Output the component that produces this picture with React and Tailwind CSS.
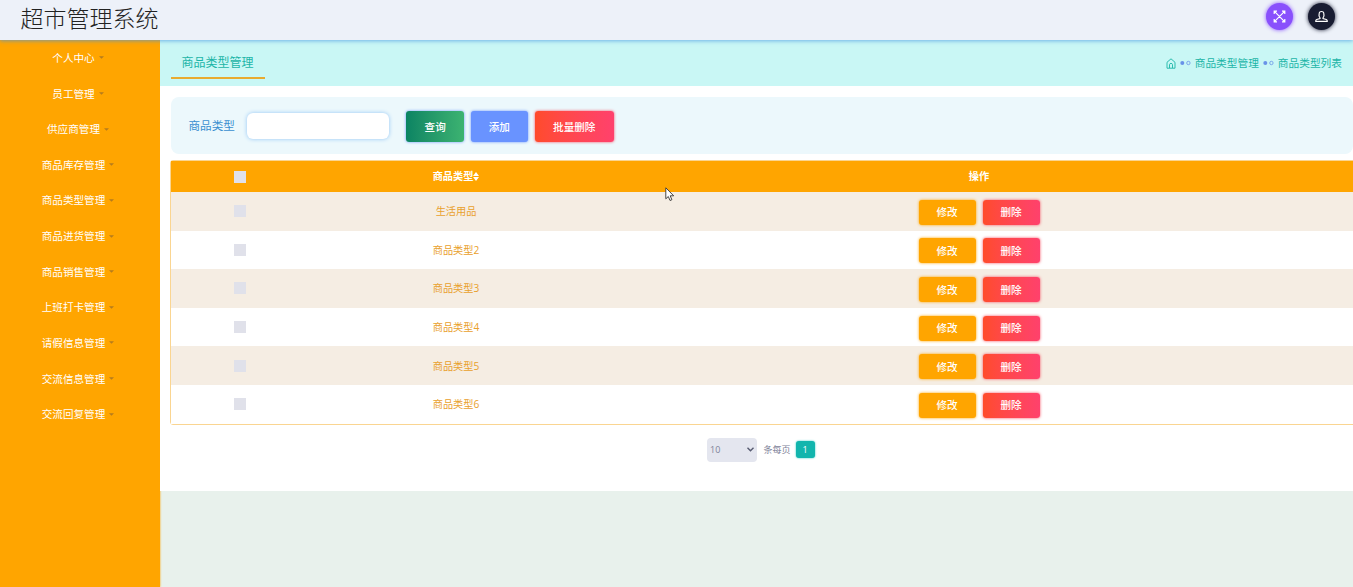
import { useState } from "react";

const menus = [
  "个人中心",
  "员工管理",
  "供应商管理",
  "商品库存管理",
  "商品类型管理",
  "商品进货管理",
  "商品销售管理",
  "上班打卡管理",
  "请假信息管理",
  "交流信息管理",
  "交流回复管理",
];

const initialTypes = ["生活用品", "商品类型2", "商品类型3", "商品类型4", "商品类型5", "商品类型6"];

const Header = () => (
  <header className="relative z-10 flex h-10 shrink-0 items-start justify-between bg-[#edf1f9] pl-[20.5px] pr-[18px] shadow-[0_1px_4px_rgba(70,150,225,0.7)]">
    <h1 className="text-[23px] font-light leading-[37px] text-[#222222]">超市管理系统</h1>
    <div className="flex gap-[15px] pt-[3px]">
      <button className="flex size-[27px] items-center justify-center rounded-full bg-[#8950fc] text-white shadow-[0_0_4px_#8950fc]">
        <svg width="13" height="13" viewBox="0 0 13 13" fill="none" stroke="currentColor" strokeWidth="1.2">
          <path d="M1.2 1.2l10.6 10.6M11.8 1.2L1.2 11.8M1.2 4V1.2H4M9 1.2h2.8V4M11.8 9v2.8H9M4 11.8H1.2V9" />
        </svg>
      </button>
      <button className="flex size-[27px] items-center justify-center rounded-full bg-[#181c32] text-white shadow-[0_0_4px_#181c32]">
        <svg width="13" height="13" viewBox="0 0 13 13" fill="none" stroke="currentColor" strokeWidth="1.2">
          <path d="M5 7.8C3.9 6.5 3.8 4.8 4.2 3.2c.2-1 1-1.7 2.3-1.7s2.1.7 2.3 1.7c.4 1.6.3 3.3-.8 4.6M5 7.8v.8l-3.3.9c-.6.2-.9.6-.9 1.2v.7h11.400v-.7c0-.6-.3-1-.9-1.200L8 8.600v-.8" />
        </svg>
      </button>
    </div>
  </header>
);

const Sidebar = () => (
  <aside className="w-40 shrink-0 bg-[#ffa500] pt-[1px] shadow-[0_0_2px_#ffa500]">
    <ul>
      {menus.map((menu) => (
        <li key={menu} className="flex h-[35.65px] items-center justify-center gap-[4px] pr-[4px] text-[10.6px] text-white">
          <span>{menu}</span>
          <svg width="5" height="3" viewBox="0 0 6 3" className="mb-[2px]">
            <path d="M0 0h6L3 3z" fill="#b67c1c" />
          </svg>
        </li>
      ))}
    </ul>
  </aside>
);

const Dots = () => (
  <svg className="mx-[4px]" width="11" height="6" viewBox="0 0 11 6">
    <circle cx="2.3" cy="3" r="2" fill="#6993e8" />
    <circle cx="8.4" cy="3" r="1.7" fill="none" stroke="#6993e8" strokeWidth="0.8" />
  </svg>
);

const Breadcrumb = () => (
  <div className="flex h-[46px] items-start justify-between bg-[#c9f7f5] pl-[11px] pr-[11px]">
    <h2 className="h-[38.5px] w-[94px] border-b-[2.5px] border-[#e8ab30] pl-[10.5px] text-[12px] leading-[45px] text-[#1bb5a7]">
      商品类型管理
    </h2>
    <div className="flex items-center text-[10.7px] leading-[46px] text-[#1bb5a7]">
      <svg width="10" height="11" viewBox="0 0 10 11" fill="none" stroke="currentColor" strokeWidth="0.9">
        <path d="M1 4.3L5 .8l4 3.5v5.9H1zM3.5 10V6.6c0-1.6 3-1.6 3 0V10" />
      </svg>
      <Dots />
      <span>商品类型管理</span>
      <Dots />
      <span>商品类型列表</span>
    </div>
  </div>
);

const SearchBar = ({ keyword, setKeyword, onAdd, onRemove }) => (
  <div className="mt-[11px] ml-[11px] flex h-[57px] items-center rounded-lg bg-[#ecf8fc] pl-[17.5px]">
    <label htmlFor="keyword" className="text-[11.6px] text-[#3a8fd0]">
      商品类型
    </label>
    <input
      id="keyword"
      value={keyword}
      onChange={(e) => setKeyword(e.target.value)}
      className="ml-[12px] mt-[1px] h-[26px] w-[142px] rounded-md bg-white px-2 text-xs shadow-[0_0_4px_#93c5f5] outline-none"
    />
    <div className="ml-[17.5px] mt-[2px] flex gap-[6.7px] text-[10.6px] font-medium text-white">
      <button className="h-[31px] w-[57.5px] rounded-[3px] bg-linear-to-r from-[#0a8463] to-[#3cb371] pt-[2px] shadow-[0_0_3px_#6993ff]">
        查询
      </button>
      <button onClick={onAdd} className="h-[31px] w-[57.5px] rounded-[3px] bg-[#6993ff] pt-[2px] shadow-[0_0_3px_#6993ff]">
        添加
      </button>
      <button onClick={onRemove} className="h-[31px] w-[79px] rounded-[3px] bg-linear-to-r from-[#ff4b2b] to-[#ff416c] pt-[2px] shadow-[0_0_3px_#f64e60]">
        批量删除
      </button>
    </div>
  </div>
);

const CheckBox = ({ checked, onChange }) => (
  <input
    type="checkbox"
    checked={checked}
    onChange={onChange}
    className="block size-[12px] appearance-none bg-[#e0e1ea] checked:bg-[#6993ff]"
  />
);

const App = () => {
  const [types, setTypes] = useState(initialTypes);
  const [selected, setSelected] = useState([]);
  const [keyword, setKeyword] = useState("");

  const rows = types.filter((type) => type.includes(keyword));

  const toggle = (type) => {
    setSelected(selected.includes(type) ? selected.filter((s) => s !== type) : [...selected, type]);
  };

  const remove = (list) => {
    setTypes(types.filter((type) => !list.includes(type)));
    setSelected([]);
  };

  return (
    <div className="flex h-screen flex-col overflow-hidden bg-[#e8f1ec] font-['Open_Sans','Noto_Sans_CJK_SC',sans-serif]">
      <Header />
      <div className="flex min-h-0 flex-1">
        <Sidebar />
        <main className="min-w-0 flex-1">
          <div className="h-[451px] bg-white">
            <Breadcrumb />
            <SearchBar
              keyword={keyword}
              setKeyword={setKeyword}
              onAdd={() => setTypes([...types, `商品类型${types.length + 1}`])}
              onRemove={() => remove(selected)}
            />

            {/* Type table, runs slightly past the right edge */}
            <div className="ml-[10px] mt-[6px] w-[1186px] rounded-[3px] border border-[#fad591] text-[10.2px]">
              <div className="grid h-[31px] grid-cols-[138px_294px_752px] place-items-center bg-[#ffa500] font-bold text-white">
                <CheckBox
                  checked={rows.length > 0 && selected.length === rows.length}
                  onChange={() => setSelected(selected.length === rows.length ? [] : rows)}
                />
                <span className="flex items-center">
                  商品类型
                  <svg width="6" height="9" viewBox="0 0 6 9" fill="currentColor">
                    <path d="M3 0L6 3.9H0zM3 9L0 5.1h6z" />
                  </svg>
                </span>
                <span>操作</span>
              </div>
              {rows.map((type) => (
                <div
                  key={type}
                  className="grid h-[38.6px] grid-cols-[138px_294px_752px] place-items-center bg-white even:bg-[#f5ede3]"
                >
                  <CheckBox checked={selected.includes(type)} onChange={() => toggle(type)} />
                  <span className="pt-[1px] text-[#e9a02c]">{type}</span>
                  <div className="mt-[2px] flex gap-[7px] text-[10.6px] font-medium text-white">
                    <button className="h-[25px] w-[57px] rounded-[3px] bg-[#ffa500] pt-[2px] shadow-[0_0_3px_#ffa500]">
                      修改
                    </button>
                    <button
                      onClick={() => remove([type])}
                      className="h-[25px] w-[57px] rounded-[3px] bg-linear-to-r from-[#ff4b2b] to-[#ff416c] pt-[2px] shadow-[0_0_3px_#f64e60]"
                    >
                      删除
                    </button>
                  </div>
                </div>
              ))}
            </div>

            {/* Pagination */}
            <div className="ml-[547px] mt-[13.4px] flex items-center text-[9px] text-[#7e8299]">
              <div className="flex h-6 w-[50px] items-center justify-between rounded-[4px] bg-[#e4e6ef] px-[3px]">
                <span>10</span>
                <svg width="7" height="5" viewBox="0 0 7 5" fill="none" stroke="#565a70" strokeWidth="1.4">
                  <path d="M.5.8l3 3 3-3" />
                </svg>
              </div>
              <span className="ml-[6.5px]">条每页</span>
              <button className="ml-[5px] h-[17px] w-[19px] rounded-[3px] bg-[#12b5ad] text-white shadow-[0_0_2px_#1bc5bd]">
                1
              </button>
            </div>
          </div>
        </main>
      </div>

      {/* Mouse pointer */}
      <svg className="absolute left-[665px] top-[187px] z-20" width="10" height="15" viewBox="0 0 10 15">
        <path d="M.8.8v11l2.5-2.3 1.7 4 1.9-.8-1.7-3.9h3.5z" fill="#fff" stroke="#333" strokeWidth="0.9" />
      </svg>
    </div>
  );
};

export default App;
